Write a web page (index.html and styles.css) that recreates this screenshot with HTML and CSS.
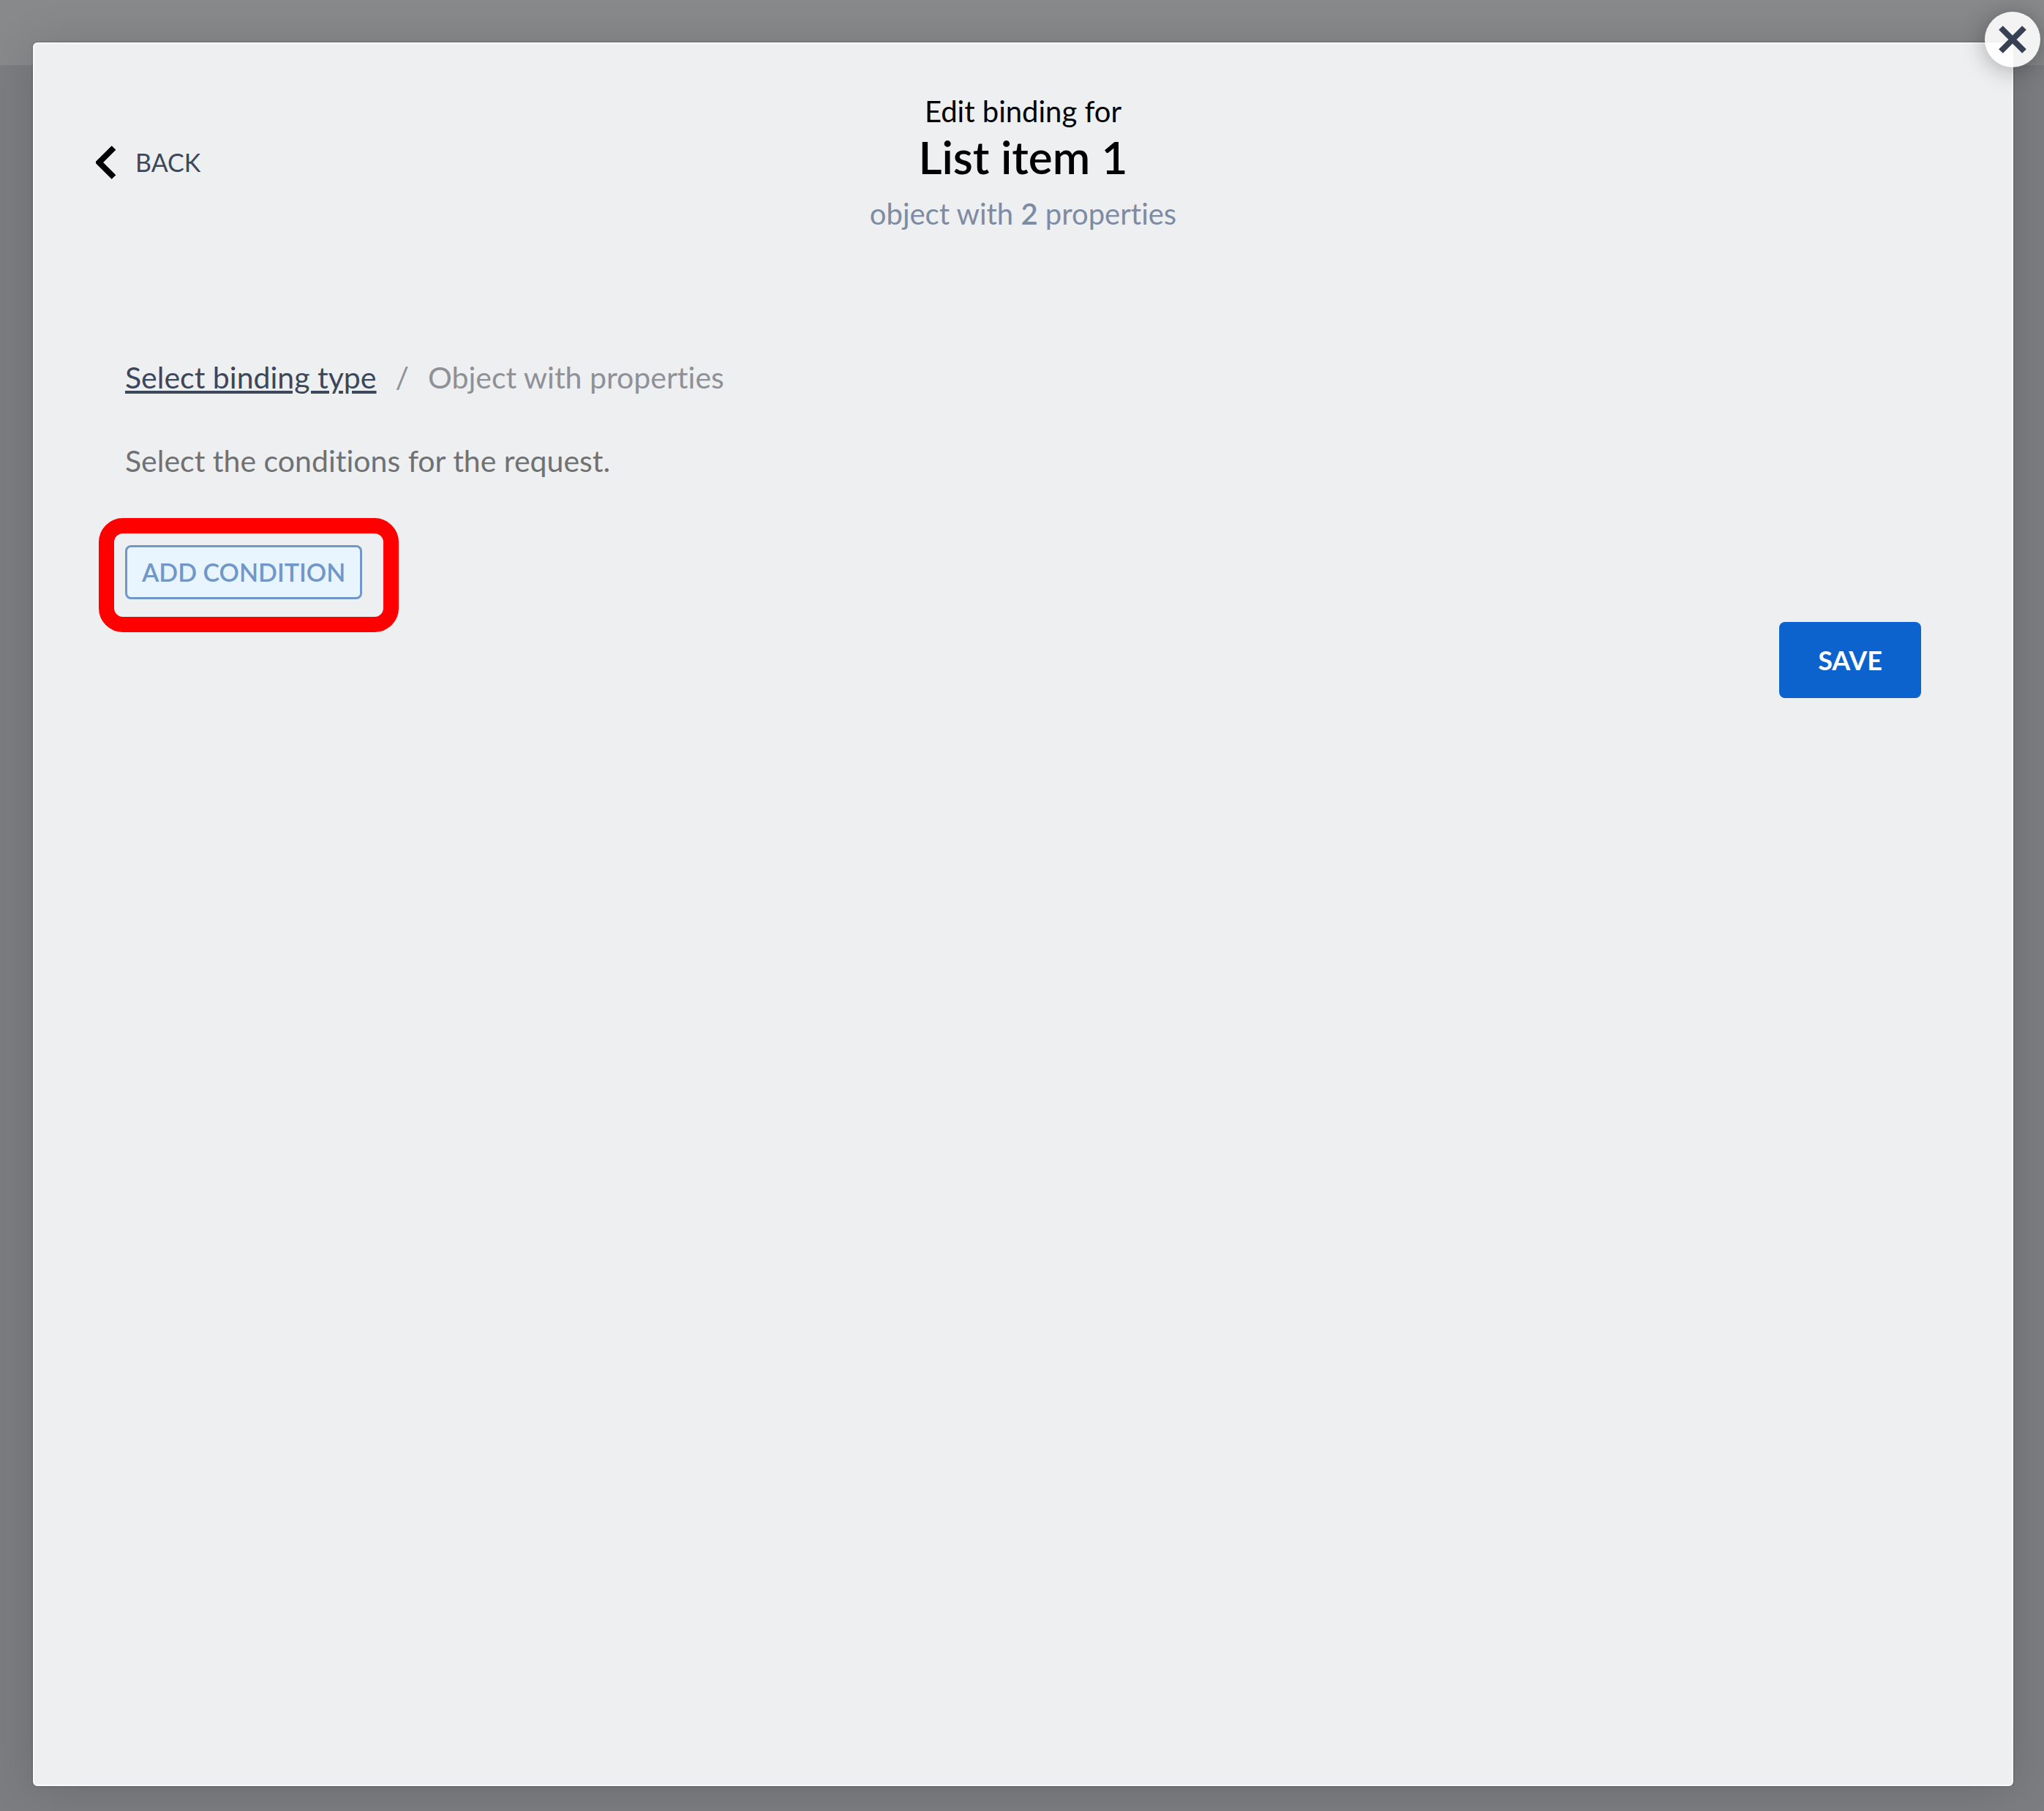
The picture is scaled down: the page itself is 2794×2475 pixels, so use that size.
FILE: index.html
```html
<!DOCTYPE html>
<html lang="en">
<head>
<meta charset="utf-8">
<meta name="viewport" content="width=device-width, initial-scale=1">
<title>Edit binding for List item 1</title>
<link rel="stylesheet" href="styles.css">
</head>
<body>
<div class="backdrop">
  <main class="dialog" role="dialog" aria-labelledby="dialog-title">
    <button class="close" type="button" aria-label="Close">
      <svg viewBox="0 0 38 38" width="38" height="38" aria-hidden="true"><path d="M3 3 35 35M35 3 3 35" fill="none" stroke="currentColor" stroke-width="8"/></svg>
    </button>
    <header class="dialog-header">
      <button class="back" type="button">
        <svg viewBox="0 0 28 46" width="28" height="46" aria-hidden="true"><path d="M24.500 3 4.500 23 24.500 43" fill="none" stroke="#000" stroke-width="8"/></svg>
        <span>BACK</span>
      </button>
      <div class="heading">
        <p class="eyebrow">Edit binding for</p>
        <h1 class="title" id="dialog-title">List item 1</h1>
        <p class="subtitle">object with <span class="count">2</span> properties</p>
      </div>
    </header>
    <section class="content">
      <nav class="breadcrumb" aria-label="Breadcrumb">
        <a class="crumb-link" href="#">Select binding type</a>
        <span>/</span>
        <span>Object with properties</span>
      </nav>
      <p class="hint">Select the conditions for the request.</p>
      <div class="condition">
        <button class="add" type="button">ADD CONDITION</button>
        <div class="highlight"></div>
      </div>
      <div class="actions">
        <button class="save" type="button">SAVE</button>
      </div>
    </section>
  </main>
</div>
</body>
</html>
```
FILE: styles.css
```css
* {
  box-sizing: border-box;
}

body {
  margin: 0;
  font-family: Lato, "Open Sans", sans-serif;
  font-size: 40px;
  line-height: 48px;
  font-variant-ligatures: none;
  color: #000;
}

p,
h1 {
  margin: 0;
}

button {
  padding: 0;
  border: 0;
  background: none;
  font: inherit;
  cursor: pointer;
}

.backdrop {
  display: flex;
  min-height: 100vh;
  padding: 58px 42px 34px 45px;
  background: linear-gradient(#88898b 0 89px, #7c7d81 89px);
}

.dialog {
  position: relative;
  flex: 1;
  border: 2px solid #f8f9fa;
  border-radius: 6px;
  background: #eeeff1;
  box-shadow: 0 4px 64px rgba(0, 0, 0, 0.14), 0 0 3px rgba(0, 0, 0, 0.3);
}

.close {
  position: absolute;
  top: -44px;
  right: -39px;
  display: flex;
  align-items: center;
  justify-content: center;
  width: 76px;
  height: 76px;
  border-radius: 50%;
  background: rgba(255, 255, 255, 0.9);
  box-shadow: 0 4px 32px rgba(0, 0, 0, 0.3);
  color: #384053;
}

.dialog-header {
  display: grid;
  grid-template-columns: 1fr auto 1fr;
  align-items: center;
  padding: 68px 84px 0;
}

.back {
  display: flex;
  align-items: center;
  justify-self: start;
  gap: 26px;
  font-size: 34px;
  color: #3c475a;
}

.heading {
  text-align: center;
}

.title {
  font-size: 62px;
  line-height: 76px;
  font-weight: 600;
}

.subtitle {
  margin-top: 16px;
  color: #7d8ba3;
}

.count {
  font-weight: 600;
}

.content {
  padding: 176px 124px 64px;
  font-size: 41px;
}

.breadcrumb {
  display: flex;
  gap: 26px;
  color: #8e9197;
}

.crumb-link {
  color: #3c475a;
}

.hint {
  margin-top: 66px;
  color: #707172;
}

.condition {
  position: relative;
  width: fit-content;
  margin-top: 91px;
}

.add {
  display: block;
  height: 74px;
  padding: 0 20px;
  border: 3px solid #6f97c8;
  border-radius: 8px;
  background: #e8f5ff;
  font-size: 34px;
  font-weight: 600;
  color: #7097c8;
}

.highlight {
  position: absolute;
  inset: -37px -50px -45px -36px;
  border: 21px solid #f00;
  border-radius: 33px;
  pointer-events: none;
}

.actions {
  display: flex;
  justify-content: flex-end;
  margin-top: 31px;
}

.save {
  height: 104px;
  padding: 0 53px;
  border-radius: 8px;
  background: #0c63ce;
  font-size: 36px;
  font-weight: 700;
  color: #fff;
}
```
